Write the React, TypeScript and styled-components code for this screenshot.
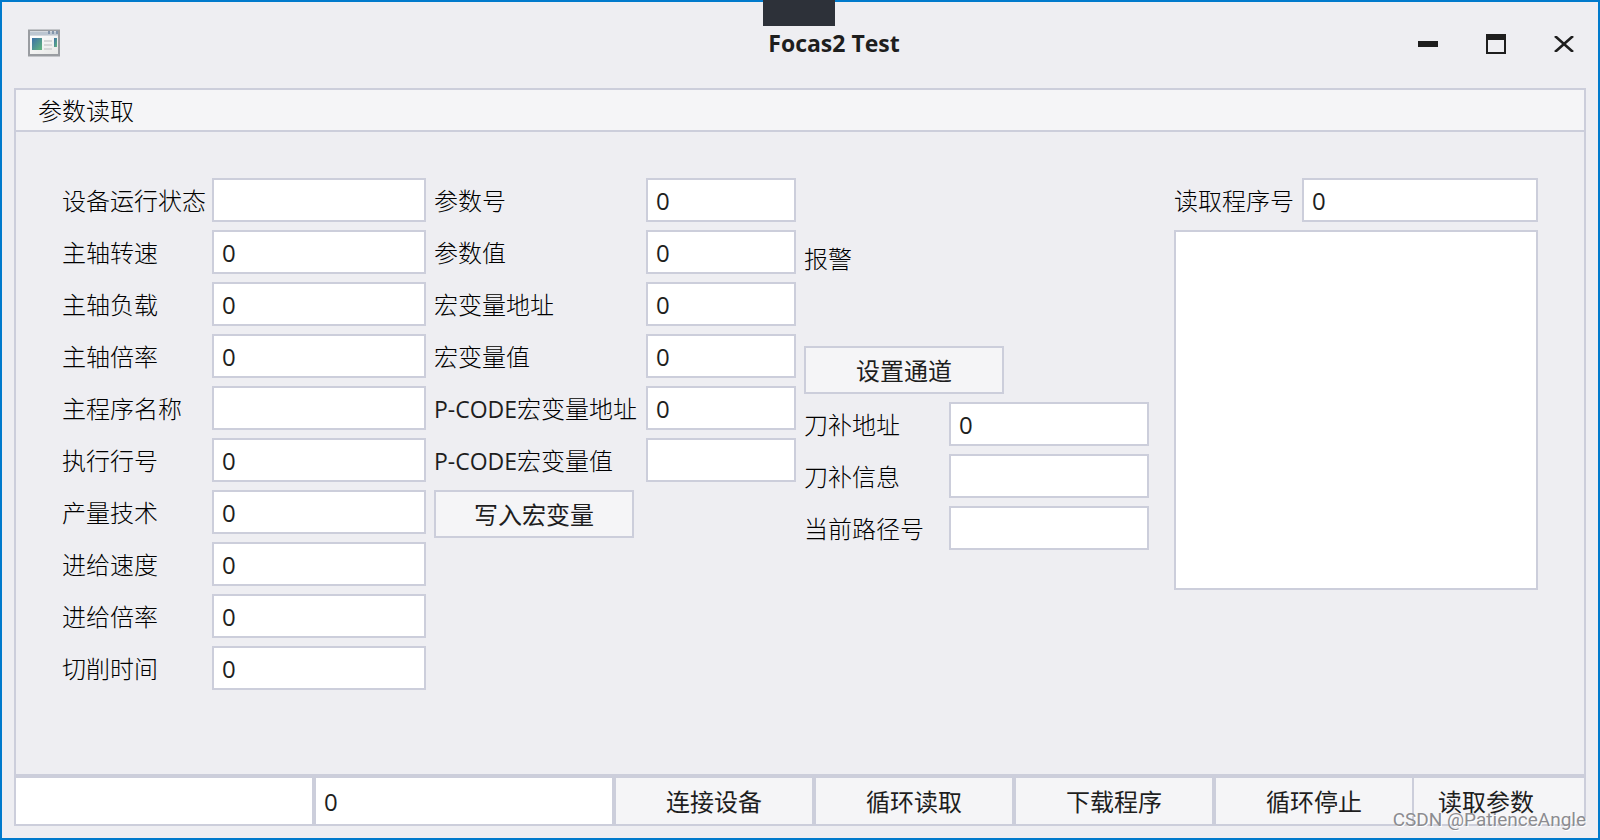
import React from "react";
import styled, { createGlobalStyle } from "styled-components";

const line = "#cccedb";
const ink = "#1e1e1e";

const GlobalStyle = createGlobalStyle`
  *, *::before, *::after { box-sizing: border-box; }
  body {
    margin: 0;
    background: #eeeef2;
    color: ${ink};
    font-family: "Open Sans", "Noto Sans CJK SC", sans-serif;
    font-size: 24px;
    line-height: 32px;
  }
  button, input, textarea { font: inherit; color: inherit; border-radius: 0; }
`;

const Window = styled.main`
  position: relative;
  display: flex;
  flex-direction: column;
  min-height: 100vh;
  padding: 0 12px 12px;
  border: 2px solid #007acc;
`;

const CaptureTab = styled.div`
  position: absolute;
  top: -2px;
  left: 50%;
  width: 72px;
  height: 26px;
  margin-left: -37px;
  background: #2d3139;
`;

const TitleBar = styled.header`
  display: flex;
  align-items: center;
  height: 84px;
  margin: 0 -12px 2px;
`;

const AppIcon = styled.div`
  width: 272px;
  padding: 0 0 2px 26px;
  svg { display: block; }
`;

const Title = styled.h1`
  flex: 1;
  margin: 0;
  padding-bottom: 2px;
  font-size: 23px;
  font-weight: 700;
  text-align: center;
`;

const Controls = styled.div`
  display: flex;
`;

const ControlButton = styled.button`
  display: grid;
  place-items: center;
  width: 68px;
  height: 48px;
  padding: 0;
  border: 0;
  background: transparent;
`;

const Panel = styled.section`
  flex: 1;
  display: flex;
  flex-direction: column;
  border: 2px solid ${line};
`;

const PanelHeader = styled.h2`
  height: 42px;
  margin: 0;
  padding: 5px 22px 3px;
  border-bottom: 2px solid ${line};
  background: #f5f5f7;
  color: #000;
  font-size: 24px;
  font-weight: 300;
`;

const PanelBody = styled.div`
  flex: 1;
  display: flex;
  align-items: flex-start;
  gap: 8px;
  padding: 46px;
`;

const Column = styled.div<{ $top?: number }>`
  display: flex;
  flex-direction: column;
  gap: 8px;
  padding-top: ${(p) => p.$top ?? 0}px;
`;

const ProgramColumn = styled(Column)`
  flex: 1;
  min-width: 240px;
  margin-left: 17px;
`;

const Row = styled.div<{ $label: number; $input?: number }>`
  display: grid;
  grid-template-columns: ${(p) => p.$label}px ${(p) => (p.$input ? `${p.$input}px` : "minmax(0, 1fr)")};
  column-gap: 8px;
  align-items: center;
`;

const Label = styled.label`
  padding-top: 2px;
  color: #000;
  font-weight: 300;
  white-space: nowrap;
`;

const Latin = styled.span`
  color: ${ink};
  font-size: 23px;
  font-weight: 400;
`;

const Alarm = styled.div`
  height: 108px;
  padding-top: 13px;
  color: #000;
  font-weight: 300;
`;

const TextBox = styled.input`
  width: 100%;
  height: 44px;
  padding: 0 8px;
  border: 2px solid ${line};
  background: #fff;
`;

const ProgramText = styled.textarea`
  display: block;
  width: 100%;
  height: 360px;
  padding: 8px;
  border: 2px solid ${line};
  background: #fff;
  resize: none;
`;

const Button = styled.button`
  width: 200px;
  height: 48px;
  padding: 2px 0 0;
  border: 2px solid ${line};
  background: #f5f5f7;
`;

const Footer = styled.footer`
  display: flex;
`;

const FooterInput = styled(TextBox)`
  flex: 1 1 300px;
  width: 300px;
  min-width: 0;
  height: 50px;
`;

const FooterButton = styled(Button)`
  position: relative;
  z-index: 1;
  flex: none;
  height: 50px;
`;

const LastButton = styled(FooterButton)`
  z-index: 0;
  margin-left: -28px;
`;

const Watermark = styled.div`
  position: absolute;
  right: 12px;
  bottom: 6px;
  z-index: 2;
  color: #8c8c90;
  font-family: Roboto, "Liberation Sans", sans-serif;
  font-size: 19px;
  line-height: 24px;
  text-shadow: 1px 1px 0 #fff;
  pointer-events: none;
`;

type FieldData = [label: string, value: string, prefix?: string];

const machineFields: FieldData[] = [
  ["设备运行状态", ""],
  ["主轴转速", "0"],
  ["主轴负载", "0"],
  ["主轴倍率", "0"],
  ["主程序名称", ""],
  ["执行行号", "0"],
  ["产量技术", "0"],
  ["进给速度", "0"],
  ["进给倍率", "0"],
  ["切削时间", "0"],
];

const macroFields: FieldData[] = [
  ["参数号", "0"],
  ["参数值", "0"],
  ["宏变量地址", "0"],
  ["宏变量值", "0"],
  ["宏变量地址", "0", "P-CODE"],
  ["宏变量值", "", "P-CODE"],
];

const toolFields: FieldData[] = [
  ["刀补地址", "0"],
  ["刀补信息", ""],
  ["当前路径号", ""],
];

function Field({ field, label, input }: { field: FieldData; label: number; input?: number }) {
  const id = React.useId();
  const [text, value, prefix] = field;
  return (
    <Row $label={label} $input={input}>
      <Label htmlFor={id}>{prefix && <Latin>{prefix}</Latin>}{text}</Label>
      <TextBox id={id} defaultValue={value} />
    </Row>
  );
}

function WindowIcon() {
  return (
    <svg width="32" height="28" viewBox="0 0 32 28" aria-hidden="true">
      <defs>
        <linearGradient id="pane" x1="0" y1="0" x2="1" y2="1">
          <stop offset="0" stopColor="#3c6fa8" />
          <stop offset="1" stopColor="#62b77c" />
        </linearGradient>
        <linearGradient id="sheet" x1="0" y1="0" x2="1" y2="1">
          <stop offset="0" stopColor="#ffffff" />
          <stop offset="1" stopColor="#e6e7e6" />
        </linearGradient>
      </defs>
      <rect width="32" height="28" fill="#c4c6ca" />
      <rect y="1" width="32" height="26" fill="#999ca1" />
      <rect x="2" y="2" width="28" height="23" fill="#d5d9df" />
      <rect x="2" y="3" width="28" height="3" fill="#bcc6d1" />
      <path d="M20 2h2v3h-2zM24 2h2v3h-2zM28 2h2v3h-2z" fill="#8496ac" />
      <rect x="2" y="7" width="28" height="18" fill="url(#sheet)" />
      <rect x="4" y="9" width="10" height="12" fill="url(#pane)" />
      <path d="M16 11h8v2h-8zM16 15h8v2h-8zM16 19h8v2h-8z" fill="#d6d7d8" />
      <rect x="26" y="9" width="3" height="9" fill="url(#pane)" />
    </svg>
  );
}

export default function App() {
  return (
    <>
      <GlobalStyle />
      <Window>
        <CaptureTab />
        <TitleBar>
          <AppIcon><WindowIcon /></AppIcon>
          <Title>Focas2 Test</Title>
          <Controls>
            <ControlButton aria-label="最小化">
              <svg width="20" height="20" viewBox="0 0 20 20"><path d="M0 7h20v6H0z" fill={ink} /></svg>
            </ControlButton>
            <ControlButton aria-label="最大化">
              <svg width="20" height="20" viewBox="0 0 20 20"><path d="M0 0h20v20H0zM2 6v12h16V6z" fill={ink} fillRule="evenodd" /></svg>
            </ControlButton>
            <ControlButton aria-label="关闭">
              <svg width="20" height="16" viewBox="0 0 20 16"><path d="M1 0L19 16M19 0L1 16" stroke={ink} strokeWidth="2.600" fill="none" /></svg>
            </ControlButton>
          </Controls>
        </TitleBar>
        <Panel>
          <PanelHeader>参数读取</PanelHeader>
          <PanelBody>
            <Column>
              {machineFields.map((f, i) => <Field key={i} field={f} label={142} input={214} />)}
            </Column>
            <Column>
              {macroFields.map((f, i) => <Field key={i} field={f} label={204} input={150} />)}
              <Button>写入宏变量</Button>
            </Column>
            <Column $top={52}>
              <Alarm>报警</Alarm>
              <Button>设置通道</Button>
              {toolFields.map((f, i) => <Field key={i} field={f} label={137} input={200} />)}
            </Column>
            <ProgramColumn>
              <Field field={["读取程序号", "0"]} label={120} />
              <ProgramText aria-label="程序内容" />
            </ProgramColumn>
          </PanelBody>
        </Panel>
        <Footer>
          <FooterInput aria-label="设备地址" />
          <FooterInput aria-label="端口" defaultValue="0" />
          <FooterButton>连接设备</FooterButton>
          <FooterButton>循环读取</FooterButton>
          <FooterButton>下载程序</FooterButton>
          <FooterButton>循环停止</FooterButton>
          <LastButton>读取参数</LastButton>
        </Footer>
        <Watermark>CSDN @PatienceAngle</Watermark>
      </Window>
    </>
  );
}
